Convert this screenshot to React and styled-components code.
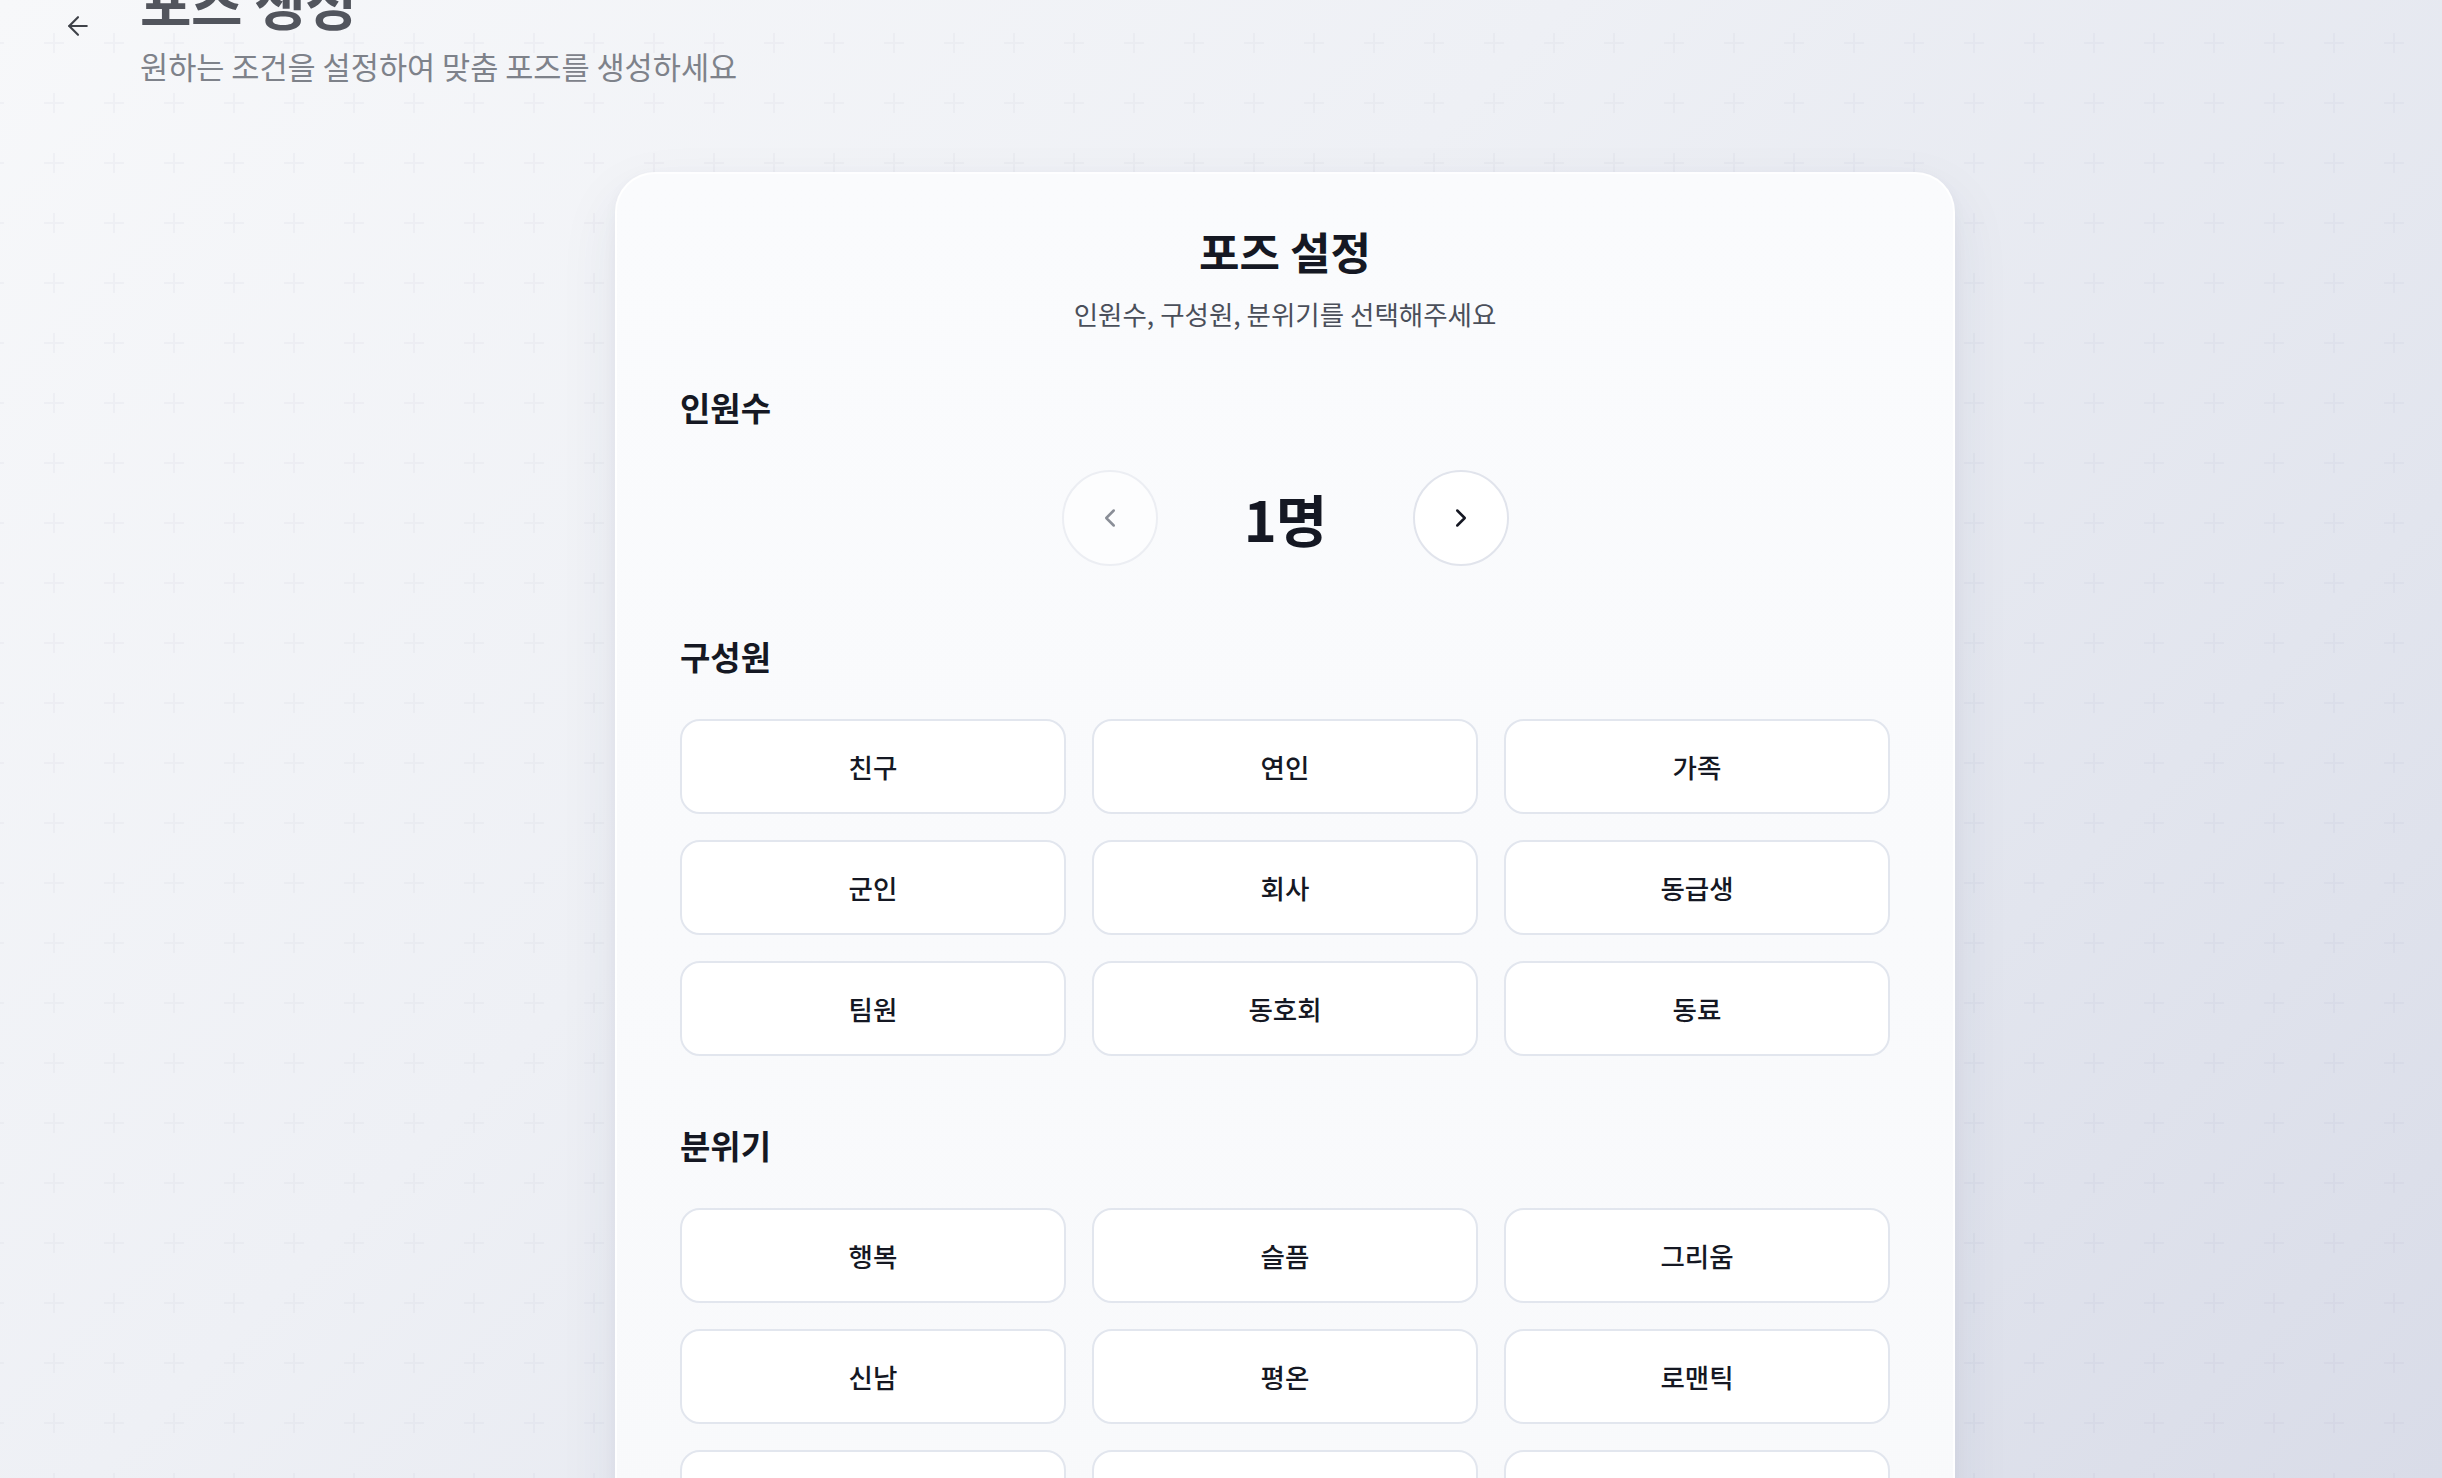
import React, { useState } from "react";
import styled, { createGlobalStyle } from "styled-components";
import { ArrowLeft, ChevronLeft, ChevronRight } from "lucide-react";

const plus =
  "url(\"data:image/svg+xml,%3Csvg xmlns='http://www.w3.org/2000/svg' width='60' height='60'%3E%3Cpath d='M30 20v20M20 30h20' stroke='%23586184' stroke-opacity='0.045' stroke-width='2'/%3E%3C/svg%3E\")";

const GlobalStyle = createGlobalStyle`
  * { box-sizing: border-box; }
  html, body { margin: 0; padding: 0; }
  body {
    font-family: "Noto Sans CJK KR", "Noto Sans", sans-serif;
    color: #151823;
    background-color: #eceef4;
    background-image: ${plus}, linear-gradient(135deg, #f7f8fa 0%, #eef0f5 40%, #e2e5ee 75%, #d9dce8 100%);
    background-size: 60px 60px, 100% 100%;
    background-position: 24px 13px, 0 0;
    background-repeat: repeat, no-repeat;
    background-attachment: fixed, fixed;
    min-height: 100vh;
  }
`;

const Header = styled.header`
  display: flex;
  align-items: flex-start;
  gap: 47px;
  margin-top: -28px;
  padding-left: 63px;
`;

const BackButton = styled.button`
  display: flex;
  align-items: center;
  justify-content: center;
  width: 30px;
  height: 30px;
  margin-top: 38.5px;
  padding: 0;
  border: none;
  background: transparent;
  color: #3f4249;
  cursor: pointer;
`;

const HeaderText = styled.div`
  display: flex;
  flex-direction: column;
  gap: 17px;
`;

const PageTitle = styled.h1`
  margin: 0;
  font-size: 56px;
  line-height: 57.6px;
  font-weight: 700;
  color: #52555d;
  letter-spacing: -0.5px;
`;

const PageSubtitle = styled.p`
  margin: 0;
  font-size: 30.6px;
  line-height: 39.2px;
  font-weight: 400;
  color: #7e828a;
`;

const Main = styled.main`
  display: flex;
  justify-content: center;
  padding: 86.4px 0 60px 128px;
`;

const Card = styled.section`
  width: 1340px;
  border-radius: 40px;
  border: 2px solid rgba(255, 255, 255, 0.85);
  background: linear-gradient(180deg, #fafbfd 0%, #f8f9fb 100%);
  box-shadow: 0 24px 60px rgba(40, 50, 90, 0.08), 0 4px 14px rgba(40, 50, 90, 0.04);
  padding: 52.5px 63px 80px;
  display: flex;
  flex-direction: column;
`;

const CardTitle = styled.h2`
  margin: 0;
  text-align: center;
  font-size: 44px;
  line-height: 48px;
  font-weight: 700;
  color: #151823;
`;

const CardSubtitle = styled.p`
  margin: 22.5px 0 0;
  text-align: center;
  font-size: 26.5px;
  line-height: 33.6px;
  color: #4a4f5a;
`;

const Section = styled.div`
  margin-top: ${(p) => p.$gap}px;
  display: flex;
  flex-direction: column;
`;

const Label = styled.h3`
  margin: 0 0 45px;
  font-size: 33px;
  line-height: 36px;
  font-weight: 700;
  color: #151823;
`;

const Stepper = styled.div`
  display: flex;
  justify-content: center;
  align-items: center;
`;

const StepButton = styled.button`
  width: 96px;
  height: 96px;
  border-radius: 50%;
  display: flex;
  align-items: center;
  justify-content: center;
  padding: 0;
  border: 2px solid ${(p) => (p.disabled ? "#eceef3" : "#e1e4ec")};
  background: ${(p) => (p.disabled ? "rgba(255,255,255,0.55)" : "#ffffff")};
  color: ${(p) => (p.disabled ? "#8a8e97" : "#151823")};
  cursor: ${(p) => (p.disabled ? "default" : "pointer")};
`;

const Value = styled.div`
  width: 255px;
  text-align: center;
  font-size: 56px;
  line-height: 60px;
  font-weight: 700;
  color: #151823;
  letter-spacing: -1px;
`;

const Grid = styled.div`
  display: grid;
  grid-template-columns: repeat(3, 1fr);
  column-gap: 26px;
  row-gap: 26px;
`;

const Option = styled.button`
  height: 95px;
  border-radius: 20px;
  border: 2px solid ${(p) => (p.$active ? "#151823" : "#e2e6ee")};
  background: #ffffff;
  font-family: "Noto Sans CJK KR", "Noto Sans", sans-serif;
  font-size: 26.5px;
  font-weight: 500;
  color: #151823;
  cursor: pointer;
  padding: 0;
`;

const members = ["친구", "연인", "가족", "군인", "회사", "동급생", "팀원", "동호회", "동료"];
const moods = ["행복", "슬픔", "그리움", "신남", "평온", "로맨틱", "유쾌", "진지", "몽환"];

export default function App() {
  const [count, setCount] = useState(1);
  const [member, setMember] = useState(null);
  const [mood, setMood] = useState(null);

  return (
    <>
      <GlobalStyle />
      <Header>
        <BackButton aria-label="뒤로">
          <ArrowLeft size={30} strokeWidth={1.7} />
        </BackButton>
        <HeaderText>
          <PageTitle>포즈 생성</PageTitle>
          <PageSubtitle>원하는 조건을 설정하여 맞춤 포즈를 생성하세요</PageSubtitle>
        </HeaderText>
      </Header>
      <Main>
        <Card>
          <CardTitle>포즈 설정</CardTitle>
          <CardSubtitle>인원수, 구성원, 분위기를 선택해주세요</CardSubtitle>

          <Section $gap={58}>
            <Label>인원수</Label>
            <Stepper>
              <StepButton disabled={count <= 1} onClick={() => setCount((c) => Math.max(1, c - 1))}>
                <ChevronLeft size={30} strokeWidth={2} />
              </StepButton>
              <Value>{count}명</Value>
              <StepButton onClick={() => setCount((c) => c + 1)}>
                <ChevronRight size={30} strokeWidth={2} />
              </StepButton>
            </Stepper>
          </Section>

          <Section $gap={72}>
            <Label>구성원</Label>
            <Grid>
              {members.map((m) => (
                <Option key={m} $active={member === m} onClick={() => setMember(m)}>
                  {m}
                </Option>
              ))}
            </Grid>
          </Section>

          <Section $gap={71}>
            <Label>분위기</Label>
            <Grid>
              {moods.map((m) => (
                <Option key={m} $active={mood === m} onClick={() => setMood(m)}>
                  {m}
                </Option>
              ))}
            </Grid>
          </Section>
        </Card>
      </Main>
    </>
  );
}
